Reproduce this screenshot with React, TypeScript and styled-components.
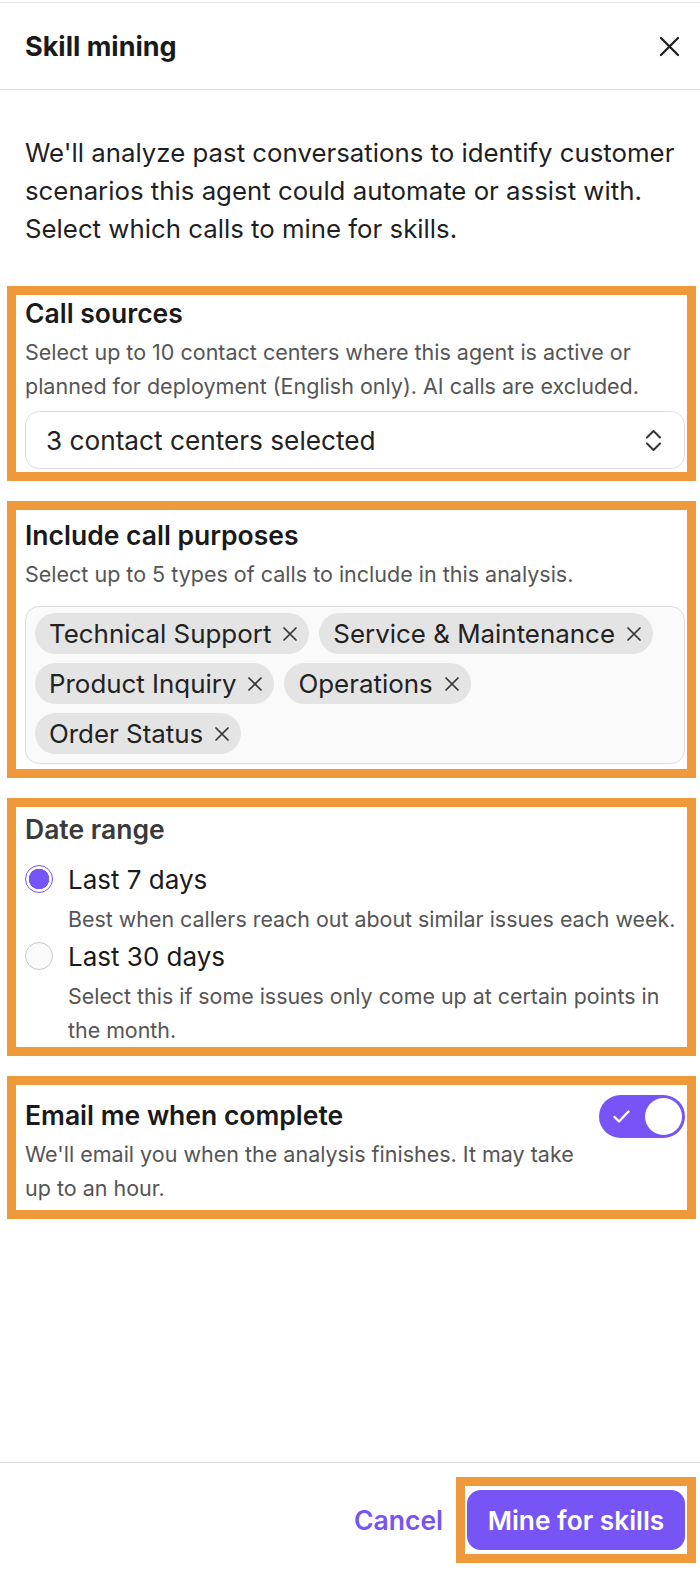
import styled, { createGlobalStyle } from "styled-components";

const PURPLE = "#7754f6";
const ORANGE = "#f0993a";

const PURPOSES = [
  "Technical Support",
  "Service & Maintenance",
  "Product Inquiry",
  "Operations",
  "Order Status",
];

const RANGES = [
  {
    label: "Last 7 days",
    hint: "Best when callers reach out about similar issues each week.",
    checked: true,
  },
  {
    label: "Last 30 days",
    hint: "Select this if some issues only come up at certain points in the month.",
    checked: false,
  },
];

const App = () => {
  return (
    <>
      <GlobalStyle />
      <Page>
        <Header>
          <Title>Skill mining</Title>
          <CloseIcon width="21" height="21" viewBox="0 0 21 21">
            <path d="M2 2 L19 19 M19 2 L2 19" />
          </CloseIcon>
        </Header>

        <Main>
          <Intro>
            We'll analyze past conversations to identify customer scenarios this
            agent could automate or assist with. Select which calls to mine for
            skills.
          </Intro>

          <Stack>
            {/* Call sources */}
            <Highlight $pt={3} $pb={3}>
              <Heading>Call sources</Heading>
              <Hint>
                Select up to 10 contact centers where this agent is active or
                planned for deployment (English only). AI calls are excluded.
              </Hint>
              <SelectBox>
                <span>3 contact centers selected</span>
                <ChevronIcon width="17" height="25" viewBox="0 0 17 25">
                  <path d="M2 9.5 L8.5 3 L15 9.5 M2 15.5 L8.5 22 L15 15.5" />
                </ChevronIcon>
              </SelectBox>
            </Highlight>

            {/* Call purposes */}
            <Highlight $pt={10} $pb={5}>
              <Heading>Include call purposes</Heading>
              <Hint>Select up to 5 types of calls to include in this analysis.</Hint>
              <TagBox>
                {PURPOSES.map((p) => (
                  <Tag key={p}>
                    {p}
                    <TagX width="16" height="16" viewBox="0 0 16 16">
                      <path d="M2 2 L14 14 M14 2 L2 14" />
                    </TagX>
                  </Tag>
                ))}
              </TagBox>
            </Highlight>

            {/* Date range */}
            <Highlight $pt={7} $pb={0}>
              <Heading $muted>Date range</Heading>
              <RadioList>
                {RANGES.map((r) => (
                  <div key={r.label}>
                    <RadioRow>
                      <Radio $checked={r.checked} />
                      {r.label}
                    </RadioRow>
                    <RadioHint>{r.hint}</RadioHint>
                  </div>
                ))}
              </RadioList>
            </Highlight>

            {/* Email */}
            <Highlight $pt={10} $pb={5}>
              <EmailRow>
                <EmailText>
                  <Heading>Email me when complete</Heading>
                  <Hint>
                    We'll email you when the analysis finishes. It may take up
                    to an hour.
                  </Hint>
                </EmailText>
                <Toggle>
                  <svg width="17" height="13" viewBox="0 0 17 13">
                    <path
                      d="M1.5 7 L6 11.5 L15.5 1.5"
                      fill="none"
                      stroke="#fff"
                      strokeWidth="2.4"
                      strokeLinecap="round"
                      strokeLinejoin="round"
                    />
                  </svg>
                  <Knob />
                </Toggle>
              </EmailRow>
            </Highlight>
          </Stack>
        </Main>

        <Footer>
          <CancelButton>Cancel</CancelButton>
          <ButtonHighlight>
            <PrimaryButton>Mine for skills</PrimaryButton>
          </ButtonHighlight>
        </Footer>
      </Page>
    </>
  );
};

export default App;

const GlobalStyle = createGlobalStyle`
  * {
    box-sizing: border-box;
  }
  html,
  body {
    margin: 0;
    padding: 0;
    background: #fff;
  }
  body {
    font-family: Inter, "Noto Sans", "Liberation Sans", sans-serif;
    color: #1d1d1d;
    -webkit-font-smoothing: antialiased;
  }
`;

const Page = styled.div`
  display: flex;
  flex-direction: column;
  min-height: 100vh;
  padding-top: 2px;
`;

const Header = styled.header`
  display: flex;
  align-items: center;
  justify-content: space-between;
  height: 88px;
  padding: 0 20px 0 25px;
  border-top: 1px solid #e6e6e6;
  border-bottom: 1px solid #e3e3e3;
`;

const Title = styled.h1`
  margin: 0;
  font-size: 27px;
  font-weight: 700;
  color: #1a1a1a;
`;

const CloseIcon = styled.svg`
  fill: none;
  stroke: #1f1f1f;
  stroke-width: 2.3;
  stroke-linecap: round;
`;

const Main = styled.main`
  flex: 1;
  padding-top: 44px;
`;

const Intro = styled.p`
  margin: 0 15px 0 25px;
  font-size: 25.8px;
  line-height: 38px;
  color: #1f1f1f;
`;

const Stack = styled.div`
  display: flex;
  flex-direction: column;
  gap: 20px;
  margin-top: 38px;
`;

const Highlight = styled.section<{ $pt: number; $pb: number }>`
  margin: 0 4px 0 7px;
  border: 9px solid ${ORANGE};
  padding: ${(p) => p.$pt}px 2px ${(p) => p.$pb}px 9px;
`;

const Heading = styled.h2<{ $muted?: boolean }>`
  margin: 0;
  font-size: 26.5px;
  line-height: 30px;
  font-weight: 600;
  color: ${(p) => (p.$muted ? "#3a3a3a" : "#1a1a1a")};
`;

const Hint = styled.p`
  margin: 7px 0 0;
  font-size: 21.5px;
  line-height: 34px;
  color: #555;
`;

const SelectBox = styled.div`
  display: flex;
  align-items: center;
  justify-content: space-between;
  height: 58px;
  margin-top: 8px;
  padding: 0 22px 0 20px;
  border: 1px solid #dedede;
  border-radius: 14px;
  font-size: 26.2px;
  color: #222;
`;

const ChevronIcon = styled.svg`
  fill: none;
  stroke: #333;
  stroke-width: 2;
  stroke-linecap: round;
  stroke-linejoin: round;
`;

const TagBox = styled.div`
  display: flex;
  flex-wrap: wrap;
  align-content: flex-start;
  gap: 9px 10px;
  min-height: 158px;
  margin-top: 15px;
  padding: 6px 9px 9px;
  border: 1px solid #dcdcdc;
  border-radius: 14px;
  background: #fafafa;
`;

const Tag = styled.span`
  display: inline-flex;
  align-items: center;
  gap: 11px;
  height: 41px;
  padding: 0 11px 0 14px;
  border-radius: 21px;
  background: #e4e4e4;
  font-size: 25.9px;
  color: #222;
`;

const TagX = styled.svg`
  fill: none;
  stroke: #333;
  stroke-width: 1.7;
  stroke-linecap: round;
`;

const RadioList = styled.div`
  display: flex;
  flex-direction: column;
  margin-top: 15px;
`;

const RadioRow = styled.label`
  display: flex;
  align-items: center;
  gap: 15px;
  height: 40px;
  font-size: 26px;
  color: #1a1a1a;
`;

const Radio = styled.span<{ $checked: boolean }>`
  flex: none;
  width: 28px;
  height: 28px;
  border-radius: 50%;
  border: ${(p) => (p.$checked ? `1.5px solid ${PURPLE}` : "1px solid #c9c9c9")};
  background: ${(p) =>
    p.$checked
      ? `radial-gradient(circle, ${PURPLE} 0 10px, #fff 10.5px)`
      : "#fafafa"};
`;

const RadioHint = styled.p`
  margin: 3px 0 0;
  padding-left: 43px;
  font-size: 21.4px;
  line-height: 34px;
  color: #555;
`;

const EmailRow = styled.div`
  display: flex;
  align-items: flex-start;
  justify-content: space-between;
  gap: 20px;
`;

const EmailText = styled.div`
  flex: 1;
  max-width: 560px;
  margin-top: 5px;
`;

const Toggle = styled.div`
  flex: none;
  display: flex;
  align-items: center;
  justify-content: space-between;
  width: 86px;
  height: 43px;
  padding: 0 3px 0 14px;
  border-radius: 22px;
  background: ${PURPLE};
`;

const Knob = styled.span`
  width: 37px;
  height: 37px;
  border-radius: 50%;
  background: #fff;
`;

const Footer = styled.footer`
  display: flex;
  align-items: center;
  justify-content: flex-end;
  height: 111px;
  padding: 14px 4px 10px 0;
  border-top: 1px solid #dcdcdc;
`;

const CancelButton = styled.button`
  margin-right: 13px;
  padding: 0;
  border: none;
  background: none;
  font-family: inherit;
  font-size: 26.5px;
  font-weight: 600;
  color: ${PURPLE};
`;

const ButtonHighlight = styled.div`
  display: flex;
  height: 86px;
  padding: 4px 2px;
  border: 9px solid ${ORANGE};
`;

const PrimaryButton = styled.button`
  width: 218px;
  height: 60px;
  border: none;
  border-radius: 14px;
  background: ${PURPLE};
  font-family: inherit;
  font-size: 26.3px;
  font-weight: 600;
  color: #fff;
`;
